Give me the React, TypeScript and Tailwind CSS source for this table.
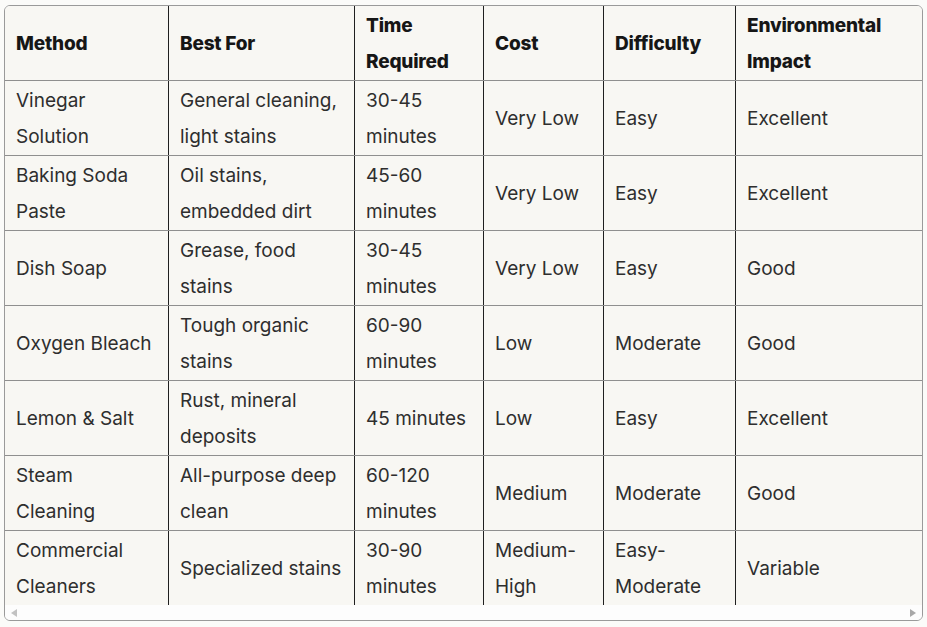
import React from "react";

const headers: string[][] = [
  ["Method"],
  ["Best For"],
  ["Time", "Required"],
  ["Cost"],
  ["Difficulty"],
  ["Environmental", "Impact"],
];

const rows: string[][][] = [
  [["Vinegar", "Solution"], ["General cleaning,", "light stains"], ["30-45", "minutes"], ["Very Low"], ["Easy"], ["Excellent"]],
  [["Baking Soda", "Paste"], ["Oil stains,", "embedded dirt"], ["45-60", "minutes"], ["Very Low"], ["Easy"], ["Excellent"]],
  [["Dish Soap"], ["Grease, food", "stains"], ["30-45", "minutes"], ["Very Low"], ["Easy"], ["Good"]],
  [["Oxygen Bleach"], ["Tough organic", "stains"], ["60-90", "minutes"], ["Low"], ["Moderate"], ["Good"]],
  [["Lemon & Salt"], ["Rust, mineral", "deposits"], ["45 minutes"], ["Low"], ["Easy"], ["Excellent"]],
  [["Steam", "Cleaning"], ["All-purpose deep", "clean"], ["60-120", "minutes"], ["Medium"], ["Moderate"], ["Good"]],
  [["Commercial", "Cleaners"], ["Specialized stains"], ["30-90", "minutes"], ["Medium-", "High"], ["Easy-", "Moderate"], ["Variable"]],
];

const widths = ["w-[163px]", "w-[186px]", "w-[129px]", "w-[120px]", "w-[132px]", "w-[187px]"];

function Cell({ lines, bold, col }: { lines: string[]; bold?: boolean; col: number }) {
  return (
    <div
      className={`${widths[col]} shrink-0 flex flex-col justify-center pt-[2px] px-[11px] ${col > 0 ? "border-l border-[#1f1f1f]" : ""}`}
    >
      {lines.map((l, i) => (
        <div
          key={i}
          className={`leading-[36px] whitespace-nowrap ${bold ? "font-extrabold text-[19px] tracking-[-0.2px] text-[#161616]" : "text-[19px] text-[#2e2e2e]"}`}
        >
          {l}
        </div>
      ))}
    </div>
  );
}

export default function App() {
  return (
    <div className="min-h-[627px] bg-[#fbfbf9] pt-[5px] pl-[4px]" style={{ fontFamily: "Inter, 'Noto Sans', sans-serif" }}>
      <div className="w-[919px] border border-[#9a9a9a] rounded-[6px] overflow-hidden bg-[#fdfdfd]">
        <div className="bg-[#f8f7f3]">
          <div className="flex h-[74px]">
            {headers.map((h, i) => (
              <Cell key={i} lines={h} bold col={i} />
            ))}
          </div>
          {rows.map((r, ri) => (
            <div key={ri} className="flex h-[75px] border-t border-[#8f8f8f]">
              {r.map((c, ci) => (
                <Cell key={ci} lines={c} col={ci} />
              ))}
            </div>
          ))}
        </div>
        <div className="h-[15px] flex items-center justify-between px-[6px] bg-[#fdfdfd]">
          <svg width="6" height="8" viewBox="0 0 6 8"><polygon points="6,0 6,8 0,4" fill="#c2c2c2" /></svg>
          <svg width="6" height="8" viewBox="0 0 6 8"><polygon points="0,0 0,8 6,4" fill="#a8a8a8" /></svg>
        </div>
      </div>
    </div>
  );
}
